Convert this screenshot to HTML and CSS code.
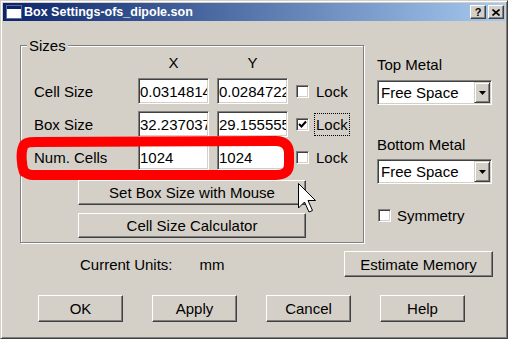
FILE: index.html
```html
<!DOCTYPE html>
<html lang="en">
<head>
  <meta charset="UTF-8" />
  <title>Box Settings-ofs_dipole.son</title>
  <link rel="stylesheet" href="styles.css">
</head>
<body>
  <div class="window">
    <div class="titlebar">
      <svg class="app-icon" width="16" height="14" viewBox="0 0 16 14">
        <rect x="0.5" y="0.5" width="15" height="13" fill="#fff" stroke="#5a6e9c"/>
        <rect x="1" y="1" width="14" height="3" fill="#0a246a"/>
      </svg>
      <span class="title">Box Settings-ofs_dipole.son</span>
      <div class="caption-buttons">
        <span class="cap-btn">?</span>
        <span class="cap-btn">
          <svg width="8" height="7" viewBox="0 0 8 7">
            <path d="M0.5 0.5 L7.5 6.5 M7.5 0.5 L0.5 6.5" stroke="#000" stroke-width="1.6"/>
          </svg>
        </span>
      </div>
    </div>

    <div class="content">
      <div class="main">
        <div class="group">
          <div class="group-title">Sizes</div>
          <div class="sizes-grid">
            <span></span>
            <span class="col-head">X</span>
            <span class="col-head">Y</span>
            <span></span>

            <label class="row-label">Cell Size</label>
            <input class="field" type="text" value="0.0314814814" />
            <input class="field" type="text" value="0.0284722222" />
            <div class="lock"><span class="check"></span><span class="lock-text">Lock</span></div>

            <label class="row-label">Box Size</label>
            <input class="field" type="text" value="32.2370370" />
            <input class="field" type="text" value="29.1555555" />
            <div class="lock">
              <span class="check">
                <svg width="9" height="9" viewBox="0 0 9 9"><path d="M1 4 L3.5 6.5 L8 1.5" fill="none" stroke="#000" stroke-width="2"/></svg>
              </span>
              <span class="lock-text focused">Lock</span>
            </div>

            <label class="row-label">Num. Cells</label>
            <input class="field" type="text" value="1024" />
            <input class="field" type="text" value="1024" />
            <div class="lock"><span class="check"></span><span class="lock-text">Lock</span></div>
          </div>
          <div class="size-buttons">
            <button class="btn">Set Box Size with Mouse</button>
            <button class="btn">Cell Size Calculator</button>
          </div>
        </div>

        <div class="side">
          <div class="side-label">Top Metal</div>
          <div class="select">
            <span>Free Space</span>
            <span class="select-btn"><svg width="7" height="4" viewBox="0 0 7 4"><path d="M0 0 H7 L3.5 4 Z" fill="#000"/></svg></span>
          </div>
          <div class="side-label bottom-label">Bottom Metal</div>
          <div class="select">
            <span>Free Space</span>
            <span class="select-btn"><svg width="7" height="4" viewBox="0 0 7 4"><path d="M0 0 H7 L3.5 4 Z" fill="#000"/></svg></span>
          </div>
          <div class="symmetry"><span class="check"></span><span>Symmetry</span></div>
        </div>
      </div>

      <div class="units-row">
        <span class="units">Current Units:<span class="units-value">mm</span></span>
        <button class="btn estimate">Estimate Memory</button>
      </div>

      <div class="dialog-buttons">
        <button class="btn">OK</button>
        <button class="btn">Apply</button>
        <button class="btn">Cancel</button>
        <button class="btn">Help</button>
      </div>
    </div>
  </div>

  <!-- red marker and mouse pointer drawn over the dialog -->
  <svg class="overlay" width="508" height="339" viewBox="0 0 508 339">
    <path d="M24 172 C21 164 21 152 23 147 C24 143 28 142 36 142 L276 141 C285 141 289 146 289 153 L289 164 C289 171 285 175 276 175 L33 175 C29 175 27 174 25 172"
          fill="none" stroke="#ff0000" stroke-width="10" stroke-linecap="round" stroke-linejoin="round"/>
    <path d="M298.5 183.5 L298.5 208 L304.5 202 L309 212 L312.5 210.5 L308 200.5 L315.5 200.5 Z"
          fill="#fff" stroke="#000" stroke-width="1" stroke-linejoin="miter"/>
  </svg>
</body>
</html>
```

FILE: styles.css
```css
* {
  margin: 0; padding: 0;
  box-sizing: border-box;
  font-family: "Liberation Sans", Arial, sans-serif;
}
body {
  background-color: #d4d0c8;
  color: #000;
  font-size: 15px;
  width: 508px;
  height: 339px;
  position: relative;
  overflow: hidden;
}
.window {
  width: 508px;
  height: 339px;
  padding: 2px;
  background-color: #d4d0c8;
  border: 1px solid;
  border-color: #d4d0c8 #404040 #404040 #d4d0c8;
  box-shadow: inset 1px 1px 0 #fff, inset -1px -1px 0 #808080;
}

/* title bar */
.titlebar {
  height: 18px;
  display: flex;
  align-items: center;
  padding-left: 3px;
  background: linear-gradient(to right, #0a246a, #a6caf0);
  color: white;
}
.app-icon {
  margin-right: 2px;
}
.title {
  font-weight: bold;
  font-size: 12.5px;
}
.caption-buttons {
  margin-left: auto;
  margin-right: 1px;
  display: flex;
  gap: 2px;
}
.cap-btn {
  width: 16px;
  height: 14px;
  display: flex;
  align-items: center;
  justify-content: center;
  background-color: #d4d0c8;
  color: #000;
  font-weight: bold;
  font-size: 11px;
  border: 1px solid;
  border-color: #fff #404040 #404040 #fff;
  box-shadow: inset -1px -1px 0 #808080;
}

/* dialog body */
.content {
  padding: 24px 12px 0 17px;
}
.main {
  display: flex;
  align-items: flex-start;
}
.group {
  width: 344px;
  border: 1px solid #808080;
  box-shadow: 1px 1px 0 #fff, inset 1px 1px 0 #fff;
  padding-bottom: 4px;
}
.group-title {
  width: fit-content;
  margin: -9px 0 0 6px;
  padding: 0 2px;
  line-height: 17px;
  background-color: #d4d0c8;
}
.sizes-grid {
  display: grid;
  grid-template-columns: 104px 79px 79px auto;
  grid-template-rows: 16px 26px 26px 26px;
  row-gap: 7px;
  align-items: center;
  margin: 1px 0 0 13px;
}
.col-head {
  width: 71px;
  text-align: center;
  line-height: 16px;
}
.field {
  width: 71px;
  height: 26px;
  padding: 0 1px 0 1px;
  font-size: 15px;
  color: #000;
  background-color: #fff;
  border: 1px solid;
  border-color: #808080 #fff #fff #808080;
  box-shadow: inset 1px 1px 0 #404040, inset -1px -1px 0 #d4d0c8;
  outline: none;
}
.check {
  width: 13px;
  height: 13px;
  flex-shrink: 0;
  display: flex;
  align-items: center;
  justify-content: center;
  background-color: #fff;
  border: 1px solid;
  border-color: #808080 #fff #fff #808080;
  box-shadow: inset 1px 1px 0 #404040, inset -1px -1px 0 #d4d0c8;
}
.lock {
  display: flex;
  align-items: center;
  gap: 6px;
}
.lock-text {
  padding: 2px 1px 2px 1px;
  line-height: 17px;
  outline: 1px dotted transparent;
}
.lock-text.focused {
  outline-color: #000;
}
.btn {
  height: 25px;
  font-size: 15px;
  color: #000;
  background-color: #d4d0c8;
  border: 1px solid;
  border-color: #fff #404040 #404040 #fff;
  box-shadow: inset -1px -1px 0 #808080;
}
.size-buttons {
  width: 228px;
  display: flex;
  flex-direction: column;
  gap: 8px;
  margin: 10px 0 0 57px;
}

/* right column */
.side {
  width: 115px;
  margin: 11px 0 0 13px;
}
.side-label {
  line-height: 17px;
}
.bottom-label {
  margin-top: 31px;
}
.select {
  height: 25px;
  margin-top: 7px;
  display: flex;
  align-items: center;
  padding: 0 1px 0 3px;
  background-color: #fff;
  border: 1px solid;
  border-color: #808080 #fff #fff #808080;
  box-shadow: inset 1px 1px 0 #404040, inset -1px -1px 0 #d4d0c8;
}
.bottom-label + .select {
  margin-top: 6px;
}
.select-btn {
  margin-left: auto;
  width: 16px;
  height: 21px;
  display: flex;
  align-items: center;
  justify-content: center;
  background-color: #d4d0c8;
  border: 1px solid;
  border-color: #d4d0c8 #404040 #404040 #d4d0c8;
  box-shadow: inset 1px 1px 0 #fff, inset -1px -1px 0 #808080;
}
.symmetry {
  margin: 23px 0 0 1px;
  display: flex;
  align-items: center;
  gap: 6px;
  line-height: 17px;
}

/* bottom rows */
.units-row {
  display: flex;
  align-items: center;
  margin-top: 8px;
}
.units {
  margin-left: 60px;
}
.units-value {
  margin-left: 27px;
}
.estimate {
  margin-left: auto;
  width: 149px;
  height: 26px;
}
.dialog-buttons {
  display: flex;
  gap: 29px;
  margin: 18px 0 0 18px;
}
.dialog-buttons .btn {
  width: 85px;
  height: 27px;
}

.overlay {
  position: absolute;
  left: 0;
  top: 0;
  pointer-events: none;
}
```
